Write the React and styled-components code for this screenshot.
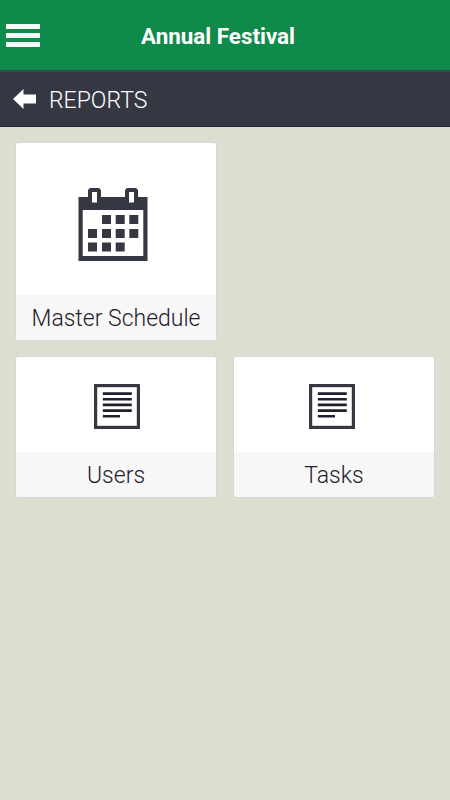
// React
import React from "react";

// Styled Components
import styled, { createGlobalStyle } from "styled-components";

const ink = "#353842";

const GlobalStyle = createGlobalStyle`
  * {
    box-sizing: border-box;
  }

  body {
    margin: 0;
    background: #dddecf;
    font-family: Roboto, "Liberation Sans", sans-serif;
  }
`;

const Page = styled.div`
  min-height: 100vh;
  background: #dddecf;
`;

const Header = styled.header`
  display: grid;
  grid-template-columns: 46px 1fr 60px;
  align-items: center;
  height: 71px;
  padding-top: 1px;
  background: #108a4a;
  border-bottom: 1px solid #2d4e45;
`;

const MenuButton = styled.button`
  display: flex;
  flex-direction: column;
  gap: 4px;
  width: 34px;
  margin-left: 6px;
  padding: 0;
  background: none;
  border: 0;
`;

const MenuLine = styled.span`
  height: 5px;
  background: #f4faf6;
`;

const Title = styled.h1`
  margin: 0;
  color: white;
  font-size: 22.4px;
  font-weight: 700;
  line-height: 26px;
  text-align: center;
  white-space: nowrap;
`;

const SubHeader = styled.div`
  display: flex;
  align-items: center;
  gap: 12px;
  height: 56px;
  padding-left: 13px;
  background: ${ink};
  border-top: 1px solid #434852;
  border-bottom: 1px solid #242340;
`;

const SubTitle = styled.h2`
  margin: 0;
  padding-top: 4px;
  color: white;
  font-size: 23px;
  font-weight: 300;
  line-height: 28px;
`;

const Grid = styled.main`
  display: grid;
  grid-template-columns: 202px 202px;
  gap: 15px 16px;
  padding: 15px;
`;

const Card = styled.a`
  display: flex;
  flex-direction: column;
  grid-column: ${props => (props.$first ? "1" : "auto")};
  height: ${props => (props.$tall ? 199 : 142)}px;
  overflow: hidden;
  background: white;
  border: 1px solid #d3d8dd;
  border-radius: 3px;
`;

const CardIcon = styled.div`
  display: flex;
  flex: 1;
  align-items: center;
  padding-top: ${props => (props.$tall ? 9 : 3)}px;
  padding-left: ${props => props.$inset}px;
`;

const CardLabel = styled.div`
  height: 45px;
  background: #f7f7f7;
  color: #1f202c;
  font-size: 23px;
  font-weight: 300;
  line-height: 48px;
  text-align: center;
  white-space: nowrap;
`;

const BackArrow = () => (
  <svg width="24" height="22" viewBox="0 0 24 22">
    <path d="M0 11 10.5 1v5.5H23v9H10.5V21z" fill="white" />
  </svg>
);

const days = [
  [24, 28], [37.7, 28], [51.3, 28],
  [10, 42], [24, 42], [37.7, 42], [51.3, 42],
  [10, 55.5], [24, 55.5], [37.7, 55.5]
];

const CalendarIcon = () => (
  <svg width="70" height="74" viewBox="0 0 70 74">
    <path
      fill={ink}
      fillRule="evenodd"
      d="M.5 10H10V3l2-2h9l2 2v7h24V3l2-2h9l2 2v7h9.5v64H.5zM14 5v10.5h5V5zM51 5v10.5h5V5zM4.7 23v46h60.6V23z"
    />
    {days.map(([x, y]) => (
      <rect key={`${x}-${y}`} x={x} y={y} width="9" height="9" fill={ink} />
    ))}
  </svg>
);

const ListIcon = () => (
  <svg width="46" height="45" viewBox="0 0 46 45">
    <rect x="1.6" y="1.6" width="42.8" height="41.8" fill="none" stroke={ink} strokeWidth="3.2" />
    <path
      d="M8.8 9.6h29M8.8 15.3h29M8.8 20.9h29M8.8 26.6h29M8.8 32.3h17.2"
      fill="none"
      stroke="#20212e"
      strokeWidth="2.6"
    />
  </svg>
);

const ReportCard = ({ label, icon, inset, tall, first }) => (
  <Card $tall={tall} $first={first}>
    <CardIcon $tall={tall} $inset={inset}>
      {icon}
    </CardIcon>
    <CardLabel>{label}</CardLabel>
  </Card>
);

const App = () => (
  <Page>
    <GlobalStyle />
    <Header>
      <MenuButton aria-label="Menu">
        <MenuLine />
        <MenuLine />
        <MenuLine />
      </MenuButton>
      <Title>Annual Festival</Title>
    </Header>
    <SubHeader>
      <BackArrow />
      <SubTitle>REPORTS</SubTitle>
    </SubHeader>
    <Grid>
      <ReportCard tall first label="Master Schedule" inset={62} icon={<CalendarIcon />} />
      <ReportCard first label="Users" inset={78} icon={<ListIcon />} />
      <ReportCard label="Tasks" inset={75} icon={<ListIcon />} />
    </Grid>
  </Page>
);

export default App;
